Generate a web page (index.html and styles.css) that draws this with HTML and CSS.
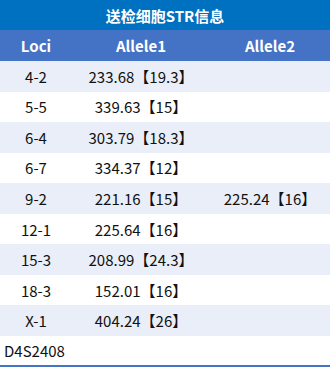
FILE: index.html
```html
<!DOCTYPE html>
<html lang="zh">
<head>
<meta charset="utf-8">
<link rel="stylesheet" href="styles.css">
</head>
<body>
<div class="panel">
  <div class="title">送检细胞STR信息</div>
  <div class="row head"><div>Loci</div><div>Allele1</div><div>Allele2</div></div>
  <div class="row alt"><div>4-2</div><div>233.68【19.3】</div><div></div></div>
  <div class="row"><div>5-5</div><div>339.63【15】</div><div></div></div>
  <div class="row alt"><div>6-4</div><div>303.79【18.3】</div><div></div></div>
  <div class="row"><div>6-7</div><div>334.37【12】</div><div></div></div>
  <div class="row alt"><div>9-2</div><div>221.16【15】</div><div>225.24【16】</div></div>
  <div class="row"><div>12-1</div><div>225.64【16】</div><div></div></div>
  <div class="row alt"><div>15-3</div><div>208.99【24.3】</div><div></div></div>
  <div class="row"><div>18-3</div><div>152.01【16】</div><div></div></div>
  <div class="row alt"><div>X-1</div><div>404.24【26】</div><div></div></div>
  <div class="foot">D4S2408</div>
</div>
</body>
</html>
```
FILE: styles.css
```css
html, body { margin: 0; padding: 0; background: #fff; }
body {
  font-family: "Noto Sans CJK SC", "Noto Sans", sans-serif;
  font-size: 15px;
  color: #111;
  width: 330px;
}
.panel {
  display: flex;
  flex-direction: column;
  border-bottom: 2px solid #4472c4;
}
.title {
  height: 30px;
  background: #0070c0;
  color: #fff;
  font-weight: bold;
  display: flex;
  align-items: center;
  justify-content: center;
  line-height: 1;
}
.row {
  display: grid;
  grid-template-columns: 72px 138px 1fr;
  height: 30.56px;
  align-items: center;
  line-height: 1;
}
.row > div { text-align: center; white-space: nowrap; }
.row.head {
  height: 31px;
  background: #4472c4;
  color: #fff;
  font-weight: bold;
}
.row.alt { background: #e9eef8; }
.foot {
  height: 29px;
  display: flex;
  align-items: center;
  padding-left: 4px;
  line-height: 1;
}
```
